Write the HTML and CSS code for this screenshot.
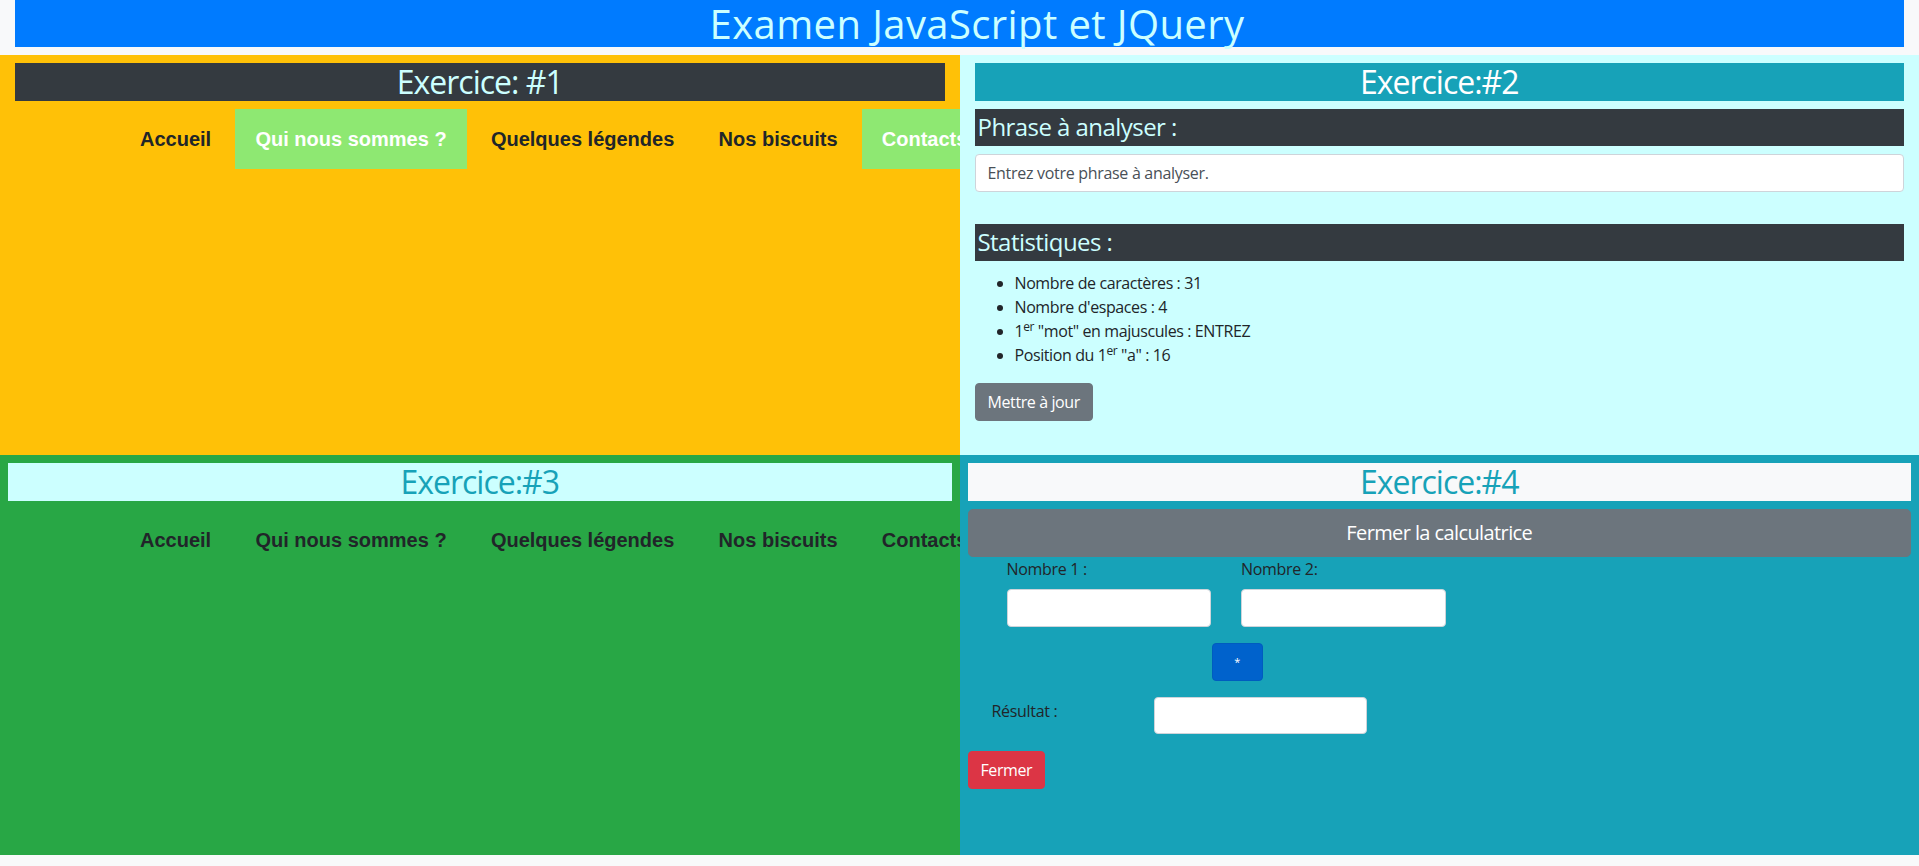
FILE: index.html
```html
<!DOCTYPE html>
<html lang="fr">
<head>
<meta charset="utf-8">
<title>Examen JavaScript et JQuery</title>
<link rel="stylesheet" href="styles.css">
</head>
<body>
<div class="page">
  <h1 class="main-title">Examen JavaScript et JQuery</h1>
  <div class="grid">
    <section class="panel panel-yellow">
      <h2 class="bar bar-dark">Exercice: #1</h2>
      <ul class="menu menu-top">
        <li><a href="#">Accueil</a></li>
        <li class="on"><a href="#">Qui nous sommes ?</a></li>
        <li><a href="#">Quelques légendes</a></li>
        <li><a href="#">Nos biscuits</a></li>
        <li class="on"><a href="#">Contacts</a></li>
      </ul>
    </section>
    <section class="panel panel-cyan">
      <h2 class="bar bar-teal">Exercice:#2</h2>
      <h4 class="sub-bar">Phrase à analyser :</h4>
      <input class="field field-wide" type="text" value="Entrez votre phrase à analyser.">
      <h4 class="sub-bar">Statistiques :</h4>
      <ul class="stats">
        <li>Nombre de caractères : 31</li>
        <li>Nombre d'espaces : 4</li>
        <li>1<sup>er</sup> "mot" en majuscules : ENTREZ</li>
        <li>Position du 1<sup>er</sup> "a" : 16</li>
      </ul>
      <button class="btn btn-gray" type="button">Mettre à jour</button>
    </section>
    <section class="panel panel-green">
      <h2 class="bar bar-light-cyan">Exercice:#3</h2>
      <ul class="menu menu-bottom">
        <li><a href="#">Accueil</a></li>
        <li><a href="#">Qui nous sommes ?</a></li>
        <li><a href="#">Quelques légendes</a></li>
        <li><a href="#">Nos biscuits</a></li>
        <li><a href="#">Contacts</a></li>
      </ul>
    </section>
    <section class="panel panel-teal">
      <h2 class="bar bar-light">Exercice:#4</h2>
      <button class="btn btn-gray btn-lg btn-block" type="button">Fermer la calculatrice</button>
      <div class="calc-row">
        <div class="calc-col">
          <label class="calc-label">Nombre 1 :</label>
          <input class="field" type="text">
        </div>
        <div class="calc-col">
          <label class="calc-label">Nombre 2:</label>
          <input class="field" type="text">
        </div>
      </div>
      <button class="btn btn-op" type="button">*</button>
      <div class="result-row">
        <label class="result-label">Résultat :</label>
        <input class="field field-result" type="text">
      </div>
      <button class="btn btn-red" type="button">Fermer</button>
    </section>
  </div>
</div>
</body>
</html>
```
FILE: styles.css
```css
* { box-sizing: border-box; }

html, body {
  margin: 0;
  padding: 0;
}

body {
  background: #f8f9fa;
  font-family: "Open Sans", "Noto Sans", sans-serif;
  font-size: 16px;
  line-height: 1.5;
  color: #212529;
  height: 866px;
  overflow: hidden;
}

.page {
  padding: 0 15px;
}

.main-title {
  margin: 0 0 8px;
  height: 47px;
  background: #007bff;
  color: #ccffff;
  font-weight: 400;
  font-size: 40px;
  line-height: 47px;
  text-align: center;
  padding-left: 35px;
  letter-spacing: 0.4px;
}

.grid {
  margin: 0 -15px;
  display: grid;
  grid-template-columns: 1fr 1fr;
  grid-template-rows: 400px 400px;
}

.panel {
  overflow: hidden;
  min-width: 0;
}

.panel-yellow { background: #ffc107; padding: 8px 15px; }
.panel-cyan { background: #ccffff; padding: 8px 15px; }
.panel-green { background: #28a745; padding: 8px; }
.panel-teal { background: #17a2b8; padding: 8px; }

.bar {
  margin: 0 0 8px;
  font-size: 32px;
  font-weight: 400;
  line-height: 38px;
  height: 38px;
  text-align: center;
  letter-spacing: -1px;
}

.bar-dark { background: #343a40; color: #ccffff; }
.bar-teal { background: #17a2b8; color: #ffffff; }
.bar-light-cyan { background: #ccffff; color: #17a2b8; }
.bar-light { background: #f8f9fa; color: #17a2b8; }

.menu {
  list-style: none;
  margin: 0;
  padding: 0;
  display: flex;
  gap: 4.3px;
  font-family: "Liberation Sans", Arial, sans-serif;
  font-weight: 700;
  font-size: 20px;
  line-height: 20px;
}

.menu-top { margin-left: 105px; }
.menu-bottom { margin-left: 112px; margin-top: 9px; }

.menu li { flex: 0 0 auto; white-space: nowrap; }

.menu a {
  display: block;
  padding: 20px;
  color: #212529;
  text-decoration: none;
}

.menu li.on a {
  background: #8ee872;
  color: #ffffff;
}

.sub-bar {
  margin: 0 0 8px;
  background: #343a40;
  color: #ccffff;
  font-size: 24px;
  font-weight: 400;
  line-height: 28.8px;
  padding: 4px 3px;
  letter-spacing: -0.55px;
}

.field {
  display: block;
  height: 38px;
  padding: 6px 12px;
  font-family: inherit;
  font-size: 16px;
  line-height: 24px;
  color: #495057;
  background: #ffffff;
  border: 1px solid #ced4da;
  border-radius: 4px;
  outline: none;
  letter-spacing: -0.3px;
}

.field-wide {
  width: 100%;
  margin-bottom: 32px;
}

.stats {
  margin: 10px 0 16px;
  padding-left: 40px;
  line-height: 24px;
  letter-spacing: -0.4px;
}

.stats sup {
  font-size: 12px;
  line-height: 0;
  vertical-align: baseline;
  position: relative;
  top: -0.5em;
}

.btn {
  display: inline-block;
  font-family: inherit;
  font-size: 16px;
  line-height: 24px;
  padding: 6px 12px;
  border: 1px solid transparent;
  border-radius: 4px;
  color: #ffffff;
  cursor: pointer;
  letter-spacing: -0.4px;
}

.btn-gray { background: #6c757d; border-color: #6c757d; }

.btn-lg {
  font-size: 20px;
  line-height: 30px;
  padding: 8px 16px;
  border-radius: 4.8px;
  letter-spacing: -0.6px;
}

.btn-block { display: block; width: 100%; }

.calc-row {
  display: flex;
  gap: 30px;
  padding-left: 39px;
}

.calc-col { width: 204.5px; }

.calc-label {
  display: block;
  margin-bottom: 8px;
  line-height: 24px;
  letter-spacing: -0.3px;
}

.calc-col .field { width: 100%; }

.btn-op {
  display: block;
  margin: 16px 0 0 244px;
  width: 51px;
  height: 38px;
  padding: 0;
  background: #0062cc;
  border-color: #005cbf;
  font-size: 11px;
  line-height: 36px;
}

.result-row {
  display: flex;
  align-items: flex-start;
  margin-top: 16px;
  padding-left: 24px;
}

.result-label {
  width: 162.7px;
  padding-top: 2px;
  line-height: 24px;
  letter-spacing: -0.3px;
}

.field-result { width: 213px; height: 37px; }

.btn-red {
  display: block;
  margin-top: 17px;
  background: #dc3545;
  border-color: #dc3545;
}
```
